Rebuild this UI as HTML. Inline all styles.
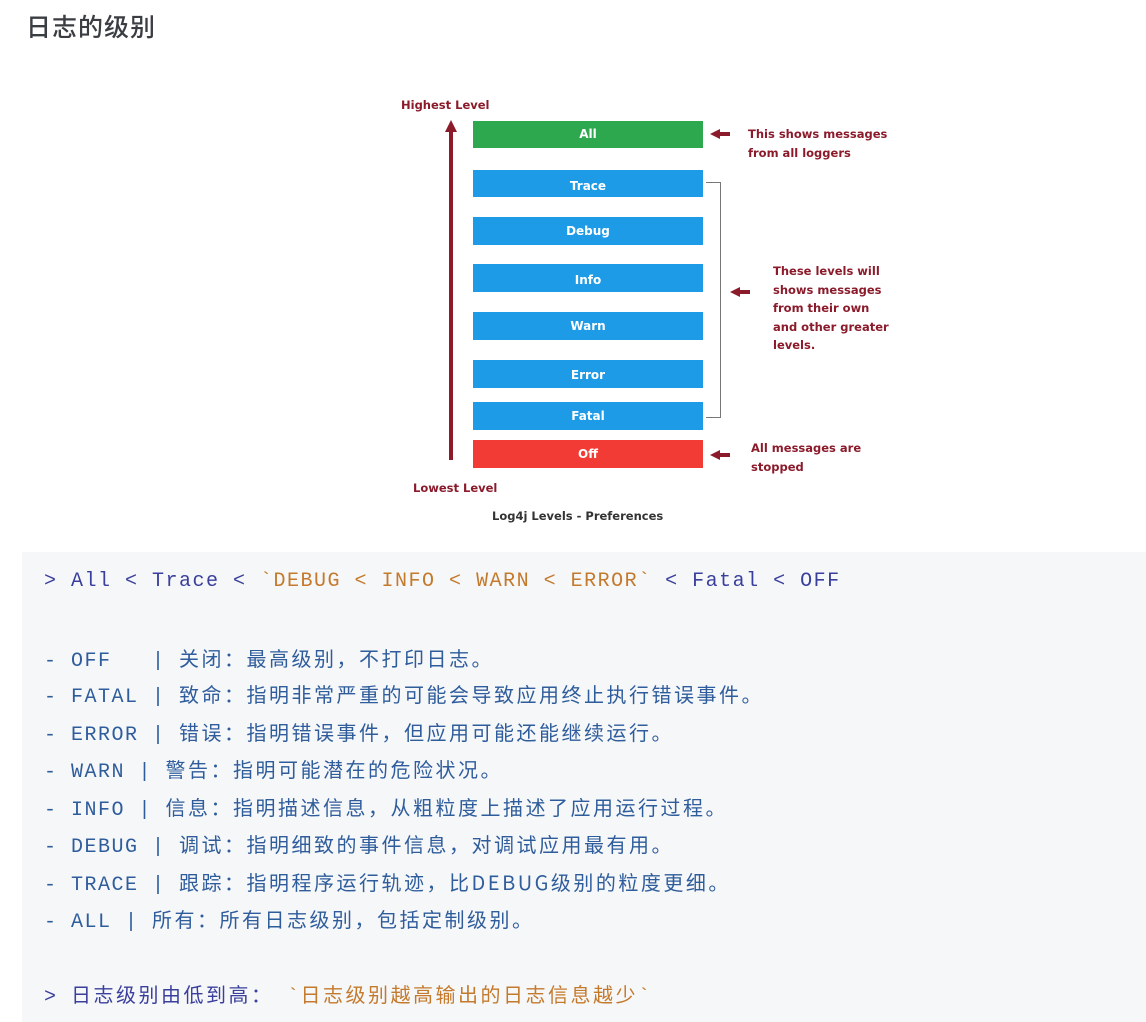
<!DOCTYPE html>
<html><head><meta charset="utf-8"><style>
body{margin:0;width:1146px;height:1022px;background:#fff;position:relative;overflow:hidden;font-family:"Liberation Sans","Noto Sans CJK SC",sans-serif}
.a{position:absolute}
.t{left:26px;top:8px;font-size:25px;color:#3a3d42;letter-spacing:1px;font-weight:500}
.box{position:absolute;left:473px;width:230px;color:#fff;font-weight:bold;font-size:12px;text-align:center;font-family:"DejaVu Sans",sans-serif}
.bl{background:#1e9be6}
.lab{position:absolute;color:#8b1a2b;font-weight:bold;font-size:11.5px;line-height:18.5px;font-family:"DejaVu Sans",sans-serif}
.code{position:absolute;left:22px;top:552px;width:1124px;height:470px;background:#f6f7f9}
.ln{position:absolute;left:44px;white-space:pre;font-family:"Liberation Mono","Noto Sans CJK SC",monospace;font-size:20px;letter-spacing:1.5px;color:#2f5d9c;line-height:24px}
.ln .c{font-family:"Noto Sans CJK SC",sans-serif;font-size:20px;letter-spacing:2.5px}
.h{color:#3a3f9c}
.o{color:#c47a2c}
.ar{position:absolute;width:0;height:0;border-top:5px solid transparent;border-bottom:5px solid transparent;border-right:10px solid #8b1a2b}
.as{position:absolute;height:4px;background:#8b1a2b;width:12px}
</style></head><body>
<div class="a t">日志的级别</div>

<div class="lab" style="left:401px;top:96px">Highest Level</div>
<div class="a" style="left:449px;top:130px;width:4px;height:330px;background:#8b1a2b"></div>
<div class="a" style="left:445px;top:120px;width:0;height:0;border-left:6px solid transparent;border-right:6px solid transparent;border-bottom:12px solid #8b1a2b"></div>
<div class="lab" style="left:413px;top:479px">Lowest Level</div>
<div class="a" style="left:492px;top:509px;font-size:11.5px;font-weight:bold;color:#333;font-family:'DejaVu Sans',sans-serif">Log4j Levels - Preferences</div>

<div class="box" style="top:121px;height:27px;line-height:27px;background:#2ea84f">All</div>
<div class="box bl" style="top:170px;height:27px;line-height:32px">Trace</div>
<div class="box bl" style="top:217px;height:28px;line-height:28px">Debug</div>
<div class="box bl" style="top:264px;height:28px;line-height:32px">Info</div>
<div class="box bl" style="top:312px;height:28px;line-height:28px">Warn</div>
<div class="box bl" style="top:360px;height:28px;line-height:30px">Error</div>
<div class="box bl" style="top:402px;height:28px;line-height:28px">Fatal</div>
<div class="box" style="top:440px;height:28px;line-height:28px;background:#f23b34">Off</div>

<div class="a" style="left:706px;top:182px;width:14px;height:234px;border:1.5px solid #777;border-left:none"></div>

<div class="ar" style="left:710px;top:129px"></div><div class="as" style="left:718px;top:132px"></div>
<div class="ar" style="left:730px;top:287px"></div><div class="as" style="left:738px;top:290px"></div>
<div class="ar" style="left:710px;top:450px"></div><div class="as" style="left:718px;top:453px"></div>

<div class="lab" style="left:748px;top:125px">This shows messages<br>from all loggers</div>
<div class="lab" style="left:773px;top:262px">These levels will<br>shows messages<br>from their own<br>and other greater<br>levels.</div>
<div class="lab" style="left:751px;top:439px">All messages are<br>stopped</div>

<div class="code"></div>
<div class="ln h" style="top:570px">&gt; All &lt; Trace &lt; <span class="o">`DEBUG &lt; INFO &lt; WARN &lt; ERROR`</span> &lt; Fatal &lt; OFF</div>
<div class="ln" style="top:646px">- OFF   | <span class="c">关闭：最高级别，不打印日志。</span></div>
<div class="ln" style="top:682px">- FATAL | <span class="c">致命：指明非常严重的可能会导致应用终止执行错误事件。</span></div>
<div class="ln" style="top:720px">- ERROR | <span class="c">错误：指明错误事件，但应用可能还能继续运行。</span></div>
<div class="ln" style="top:757px">- WARN | <span class="c">警告：指明可能潜在的危险状况。</span></div>
<div class="ln" style="top:795px">- INFO | <span class="c">信息：指明描述信息，从粗粒度上描述了应用运行过程。</span></div>
<div class="ln" style="top:832px">- DEBUG | <span class="c">调试：指明细致的事件信息，对调试应用最有用。</span></div>
<div class="ln" style="top:870px">- TRACE | <span class="c">跟踪：指明程序运行轨迹，比DEBUG级别的粒度更细。</span></div>
<div class="ln" style="top:907px">- ALL | <span class="c">所有：所有日志级别，包括定制级别。</span></div>
<div class="ln h" style="top:982px">&gt; <span class="c">日志级别由低到高：</span> <span class="o">`<span class="c">日志级别越高输出的日志信息越少</span>`</span></div>
</body></html>
